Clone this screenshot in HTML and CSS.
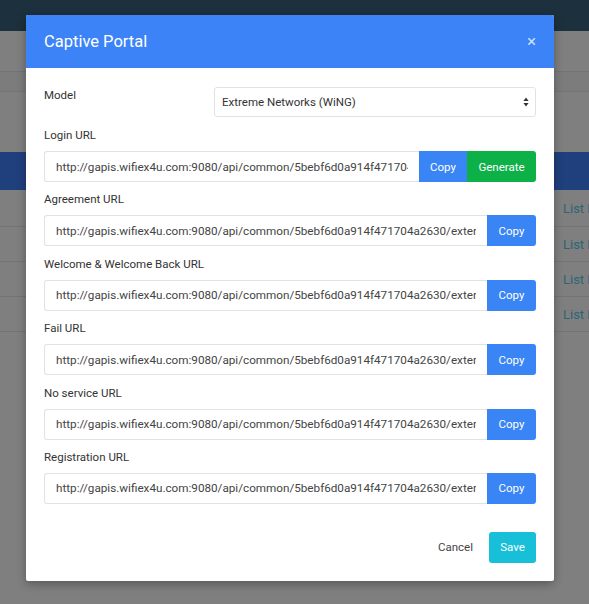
FILE: index.html
```html
<!DOCTYPE html>
<html>
<head>
<meta charset="utf-8">
<link rel="stylesheet" href="styles.css">
</head>
<body>
<div class="page">
  <div class="navbar"></div>
  <div class="subheader"></div>
  <div class="toolbar"></div>
  <div class="spacer"></div>
  <div class="thead"></div>
  <div class="row first"><span class="link">List Locations</span></div>
  <div class="row"><span class="link">List Locations</span></div>
  <div class="row"><span class="link">List Locations</span></div>
  <div class="row"><span class="link">List Locations</span></div>
</div>

<div class="modal">
  <div class="modal-header">
    <h1 class="modal-title">Captive Portal</h1>
    <span class="close">×</span>
  </div>
  <div class="modal-body">
    <div class="model-row">
      <label class="label model-label">Model</label>
      <div class="select">
        <span>Extreme Networks (WiNG)</span>
        <svg class="caret" width="6" height="10" viewBox="0 0 6 10"><path d="M3 0.5L5.6 4H0.4z M3 9.5L5.6 6H0.4z" fill="#333"/></svg>
      </div>
    </div>

    <div class="group">
      <label class="label">Login URL</label>
      <div class="input-group">
        <input class="input" value="http://gapis.wifiex4u.com:9080/api/common/5bebf6d0a914f471704a2630/external/login" readonly>
        <button class="btn btn-copy btn-mid">Copy</button>
        <button class="btn btn-generate">Generate</button>
      </div>
    </div>

    <div class="group">
      <label class="label">Agreement URL</label>
      <div class="input-group">
        <input class="input" value="http://gapis.wifiex4u.com:9080/api/common/5bebf6d0a914f471704a2630/external/agreement" readonly>
        <button class="btn btn-copy">Copy</button>
      </div>
    </div>

    <div class="group">
      <label class="label">Welcome &amp; Welcome Back URL</label>
      <div class="input-group">
        <input class="input" value="http://gapis.wifiex4u.com:9080/api/common/5bebf6d0a914f471704a2630/external/welcome" readonly>
        <button class="btn btn-copy">Copy</button>
      </div>
    </div>

    <div class="group">
      <label class="label">Fail URL</label>
      <div class="input-group">
        <input class="input" value="http://gapis.wifiex4u.com:9080/api/common/5bebf6d0a914f471704a2630/external/fail" readonly>
        <button class="btn btn-copy">Copy</button>
      </div>
    </div>

    <div class="group">
      <label class="label">No service URL</label>
      <div class="input-group">
        <input class="input" value="http://gapis.wifiex4u.com:9080/api/common/5bebf6d0a914f471704a2630/external/noservice" readonly>
        <button class="btn btn-copy">Copy</button>
      </div>
    </div>

    <div class="group">
      <label class="label">Registration URL</label>
      <div class="input-group">
        <input class="input" value="http://gapis.wifiex4u.com:9080/api/common/5bebf6d0a914f471704a2630/external/registration" readonly>
        <button class="btn btn-copy">Copy</button>
      </div>
    </div>
  </div>
  <div class="modal-footer">
    <button class="btn-cancel">Cancel</button>
    <button class="btn btn-save">Save</button>
  </div>
</div>
</body>
</html>
```

FILE: styles.css
```css
html, body {
  margin: 0;
  padding: 0;
  overflow: hidden;
  width: 589px;
  height: 604px;
  background: #7f7f7f;
  font-family: Roboto, "Liberation Sans", sans-serif;
}

.page {
  width: 589px;
}

.navbar {
  height: 31px;
  background: #1c303d;
}

.subheader {
  height: 40px;
  background: #7f7f7f;
  border-bottom: 1px solid #747474;
}

.toolbar {
  height: 19px;
  background: #7c7c7c;
  border-bottom: 1px solid #747474;
}

.spacer {
  height: 60px;
  background: #7f7f7f;
}

.thead {
  height: 38px;
  background: #1f3f7d;
}

.row {
  height: 34px;
  border-bottom: 1px solid #747474;
  display: flex;
  align-items: center;
  padding-left: 563px;
  white-space: nowrap;
  overflow: hidden;
}

.row.first {
  height: 36px;
}

.link {
  color: #2b6676;
  font-size: 13px;
}

.modal {
  position: absolute;
  left: 26px;
  top: 15px;
  width: 528px;
  background: #fff;
  box-shadow: 0 3px 10px rgba(0, 0, 0, 0.3);
  border-radius: 2px;
}

.modal-header {
  height: 53px;
  background: #3b83f6;
  display: flex;
  align-items: center;
  justify-content: space-between;
  padding: 0 18px;
  border-radius: 2px 2px 0 0;
}

.modal-title {
  margin: 0;
  font-size: 16.5px;
  font-weight: 400;
  color: #fff;
}

.close {
  color: rgba(255, 255, 255, 0.75);
  font-size: 17px;
  line-height: 1;
}

.modal-body {
  padding: 19px 18px 0 18px;
}

.label {
  display: block;
  font-size: 11.5px;
  line-height: 18px;
  color: #333;
}

.model-row {
  display: flex;
  align-items: flex-start;
  margin-bottom: 9px;
}

.model-label {
  width: 170px;
  margin-top: -1px;
}

.select {
  flex: 1;
  height: 30px;
  box-sizing: border-box;
  border: 1px solid #e2e2e2;
  border-radius: 3px;
  display: flex;
  align-items: center;
  justify-content: space-between;
  padding: 0 6px 0 7px;
  font-size: 11.5px;
  color: #333;
}

.caret {
  display: block;
}

.group {
  margin-bottom: 8.4px;
}

.group .label {
  margin-bottom: 7px;
}

.input-group {
  display: flex;
  height: 31px;
}

.input {
  flex: 1;
  min-width: 0;
  height: 31px;
  box-sizing: border-box;
  border: 1px solid #e2e2e2;
  border-right: none;
  border-radius: 3px 0 0 3px;
  padding: 0 11px;
  font-family: Roboto, "Liberation Sans", sans-serif;
  font-size: 11.7px;
  color: #444;
  outline: none;
  background: #fff;
}

.btn {
  border: none;
  color: #fff;
  font-family: Roboto, "Liberation Sans", sans-serif;
  font-size: 11.5px;
  height: 31px;
  padding: 0;
  cursor: pointer;
}

.btn-copy {
  width: 49px;
  background: #3a85f5;
  border-radius: 0 3px 3px 0;
}

.btn-copy.btn-mid {
  width: 48px;
  border-radius: 0;
}

.btn-generate {
  width: 69px;
  background: #0db148;
  border-radius: 0 3px 3px 0;
}

.modal-footer {
  display: flex;
  justify-content: flex-end;
  align-items: center;
  padding: 19.6px 18px 18px 18px;
}

.btn-cancel {
  background: none;
  border: none;
  font-family: Roboto, "Liberation Sans", sans-serif;
  font-size: 11.5px;
  color: #444;
  padding: 0;
  margin-right: 16px;
  height: 31px;
}

.btn-save {
  width: 47px;
  background: #17bfd8;
  border-radius: 3px;
}
```
